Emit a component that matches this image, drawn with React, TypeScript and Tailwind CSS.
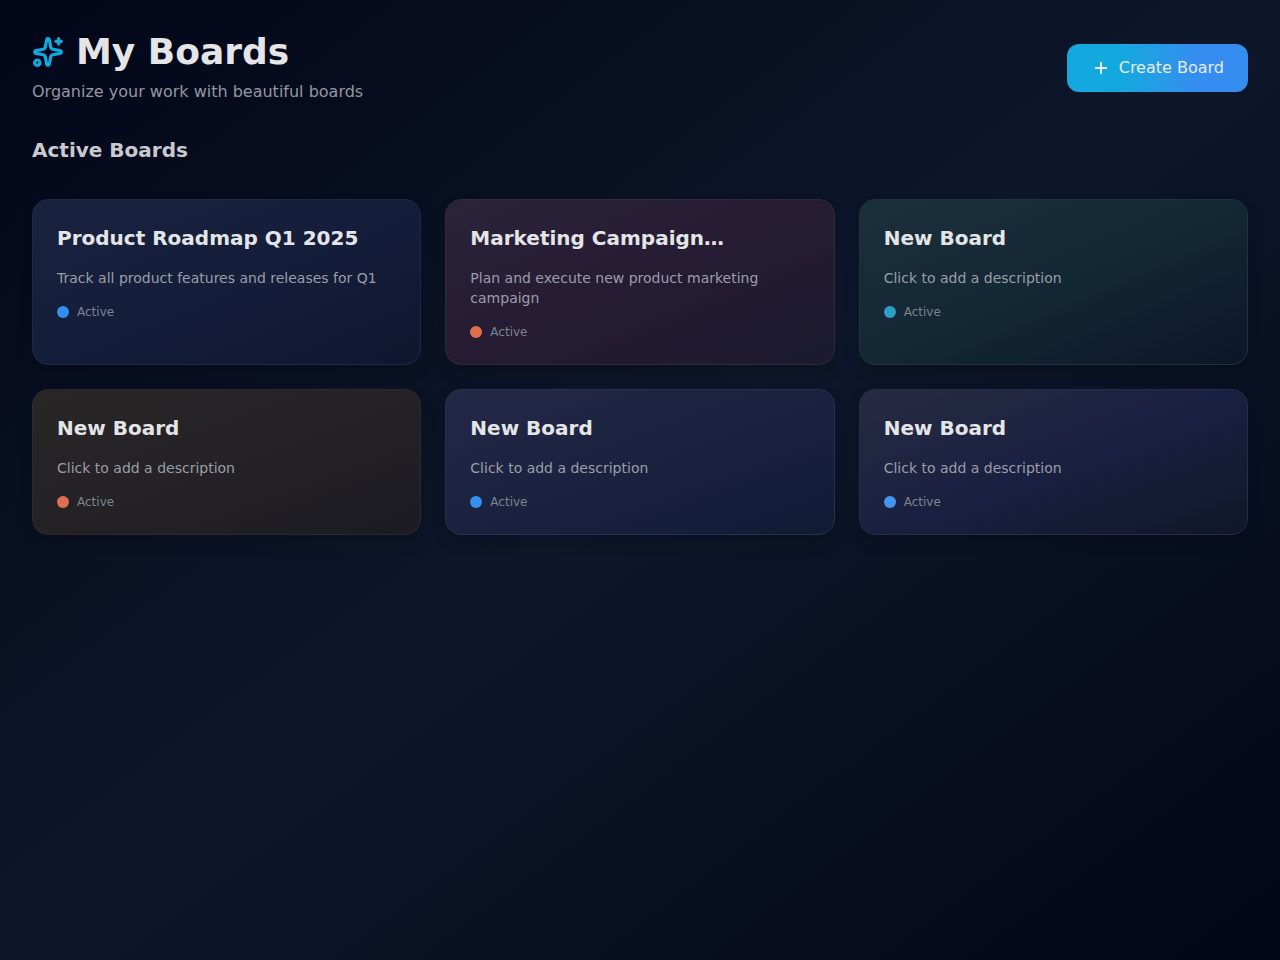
import { Plus, Sparkles } from "lucide-react";

type Board = {
  title: string;
  description: string;
  surface: string;
  dot: string;
};

const boards: Board[] = [
  {
    title: "Product Roadmap Q1 2025",
    description: "Track all product features and releases for Q1",
    surface: "from-[#19233f] via-[#141d3a] to-[#101630] border-[#1f2945]",
    dot: "bg-[#358ff0]",
  },
  {
    title: "Marketing Campaign…",
    description: "Plan and execute new product marketing campaign",
    surface: "from-[#2b2339] via-[#251c33] to-[#1b1a30] border-[#302a40]",
    dot: "bg-[#e06f52]",
  },
  {
    title: "New Board",
    description: "Click to add a description",
    surface: "from-[#1c2f3c] via-[#132834] to-[#0d162a] border-[#1f3340]",
    dot: "bg-[#2f9fc4]",
  },
  {
    title: "New Board",
    description: "Click to add a description",
    surface: "from-[#292627] via-[#242225] to-[#1c1b23] border-[#2d2a2e]",
    dot: "bg-[#e06f52]",
  },
  {
    title: "New Board",
    description: "Click to add a description",
    surface: "from-[#232846] via-[#1a2240] to-[#111a35] border-[#273050]",
    dot: "bg-[#358ff0]",
  },
  {
    title: "New Board",
    description: "Click to add a description",
    surface: "from-[#272b42] via-[#1a2040] to-[#10172a] border-[#272d47]",
    dot: "bg-[#4496ee]",
  },
];

function BoardCard({ title, description, surface, dot }: Board) {
  return (
    <article
      className={`rounded-2xl border bg-linear-to-br/srgb p-6 shadow-[0_8px_16px_-2px_rgba(0,0,0,0.18)] ${surface}`}
    >
      <h3 className="mb-4 truncate text-xl font-bold text-[#e4e5e7]">{title}</h3>
      <p className="mb-4 text-sm text-[#9b9ea8]">{description}</p>
      <div className="flex items-center gap-2">
        <span className={`size-3 rounded-full ${dot}`} />
        <span className="text-xs text-[#7f828f]">Active</span>
      </div>
    </article>
  );
}

export default function App() {
  return (
    <main className="min-h-screen bg-linear-to-br/srgb from-[#020618] via-[#0d1729] to-[#020618] p-8 font-['DejaVu_Sans',sans-serif]">
      <header className="mb-8 flex items-center justify-between">
        <div>
          <h1 className="mb-2 flex items-center gap-3 text-4xl font-bold text-[#e4e5e7]">
            <Sparkles className="size-8 text-[#14a9de]" strokeWidth={2.4} />
            My Boards
          </h1>
          <p className="text-base text-[#9497a1]">Organize your work with beautiful boards</p>
        </div>
        <button className="flex h-12 items-center gap-2 rounded-xl bg-linear-to-r/srgb from-[#14a9de] from-30% to-[#358eef] to-70% px-6 text-base text-[#e9ebef]">
          <Plus className="mx-px size-[18px]" strokeWidth={2.6} />
          Create Board
        </button>
      </header>
      <section>
        <h2 className="mb-[35px] text-xl font-bold text-[#c8cad0]">Active Boards</h2>
        <div className="grid grid-cols-3 gap-6">
          {boards.map((board, index) => (
            <BoardCard key={index} {...board} />
          ))}
        </div>
      </section>
    </main>
  );
}
